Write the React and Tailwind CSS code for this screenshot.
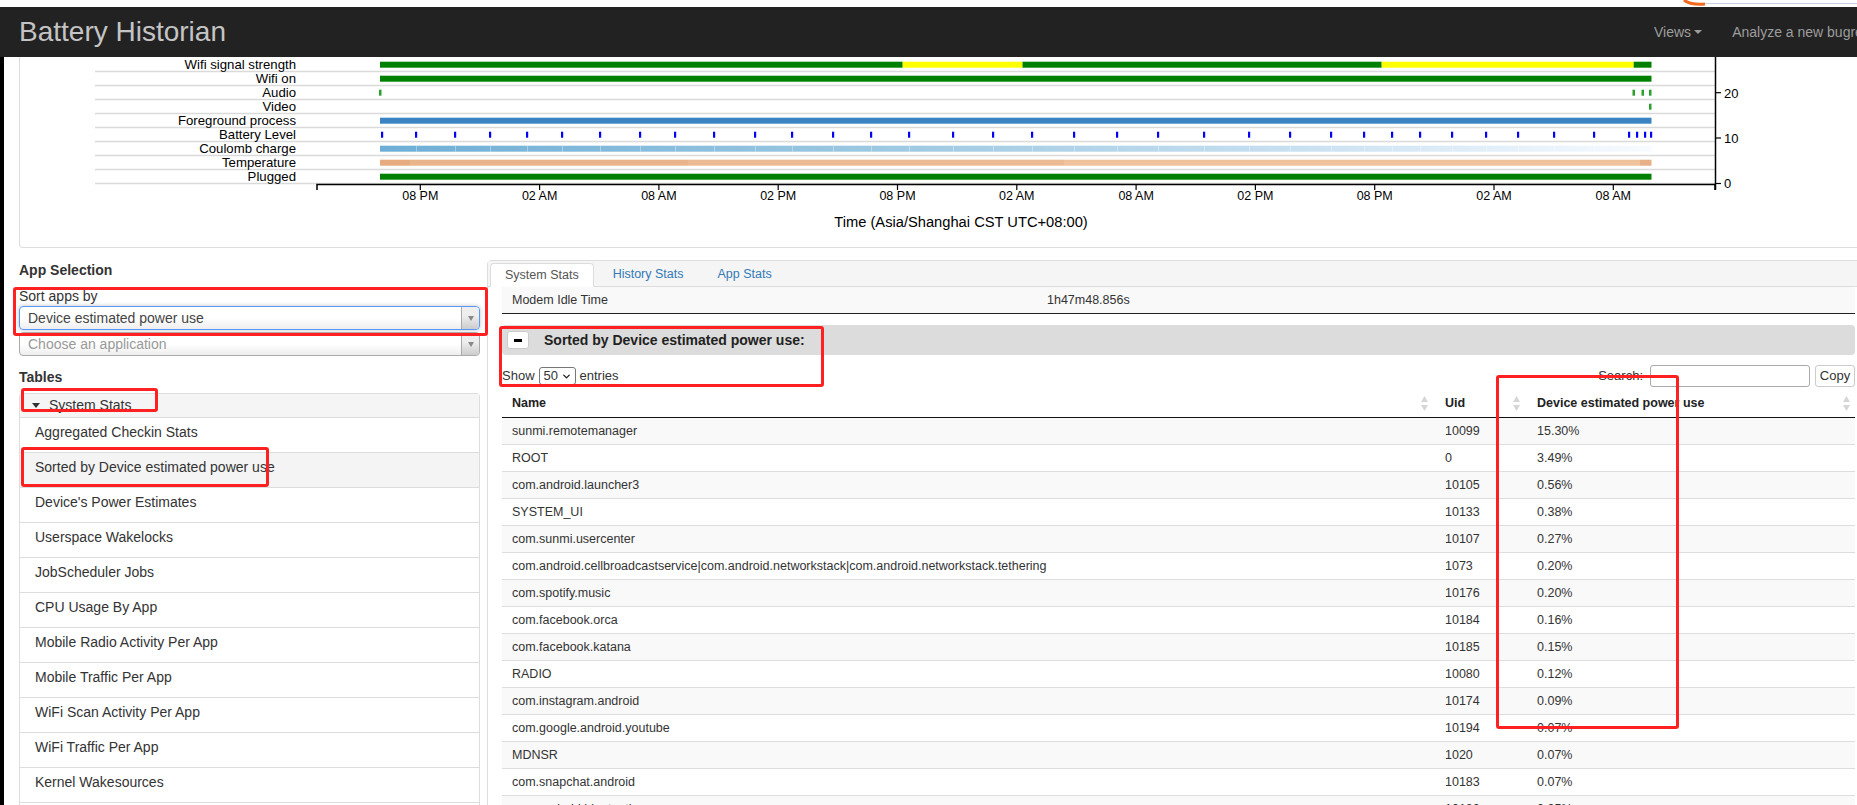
import React from 'react';
import { ChevronDown } from 'lucide-react';

// chart geometry, in page pixels (the svg viewBox starts at the panel's inner corner)
const labels = ['Wifi signal strength', 'Wifi on', 'Audio', 'Video', 'Foreground process', 'Battery Level', 'Coulomb charge', 'Temperature', 'Plugged'];
const rowY = (i) => 64.7 + 14 * i;
const X0 = 380;
const X1 = 1651.5;
const timeTicks = ['08 PM', '02 AM', '08 AM', '02 PM', '08 PM', '02 AM', '08 AM', '02 PM', '08 PM', '02 AM', '08 AM'];
const batteryTicks = [382, 416, 455, 490, 527, 562, 600, 640, 675, 714, 755, 792, 833, 871, 909, 953, 993, 1032, 1074, 1117, 1158, 1204, 1249, 1290, 1331, 1364, 1392, 1420, 1452, 1486, 1518, 1554, 1594, 1629, 1637, 1645, 1651];

const wifiSignal = [
  [380, 902.7, '#008000'],
  [902.7, 1022.5, '#ffff00'],
  [1022.5, 1381.7, '#008000'],
  [1381.7, 1633.7, '#ffff00'],
  [1633.7, 1651.5, '#008000'],
];
const temperature = [
  [380, 410, '#e6ab7f'],
  [410, 688, '#eab48a'],
  [688, 1064, '#edbb93'],
  [1064, 1640, '#f0c29c'],
  [1640, 1651.5, '#e8b088'],
];

const apps = [
  ['sunmi.remotemanager', '10099', '15.30%'],
  ['ROOT', '0', '3.49%'],
  ['com.android.launcher3', '10105', '0.56%'],
  ['SYSTEM_UI', '10133', '0.38%'],
  ['com.sunmi.usercenter', '10107', '0.27%'],
  ['com.android.cellbroadcastservice|com.android.networkstack|com.android.networkstack.tethering', '1073', '0.20%'],
  ['com.spotify.music', '10176', '0.20%'],
  ['com.facebook.orca', '10184', '0.16%'],
  ['com.facebook.katana', '10185', '0.15%'],
  ['RADIO', '10080', '0.12%'],
  ['com.instagram.android', '10174', '0.09%'],
  ['com.google.android.youtube', '10194', '0.07%'],
  ['MDNSR', '1020', '0.07%'],
  ['com.snapchat.android', '10183', '0.07%'],
  ['com.android.bluetooth', '10182', '0.05%'],
];

const tables = [
  'Aggregated Checkin Stats',
  'Sorted by Device estimated power use',
  "Device's Power Estimates",
  'Userspace Wakelocks',
  'JobScheduler Jobs',
  'CPU Usage By App',
  'Mobile Radio Activity Per App',
  'Mobile Traffic Per App',
  'WiFi Scan Activity Per App',
  'WiFi Traffic Per App',
  'Kernel Wakesources',
  'Kernel Wakelocks',
];

const Bar = ({ row, from, to, color }) => (
  <rect x={from} y={rowY(row) - 3} width={to - from} height={6} fill={color} />
);

const Timeline = () => (
  <svg width="1858" height="190" viewBox="20 57 1858 190" className="block">
    <defs>
      <linearGradient id="coulomb" x1="0" x2="1" y1="0" y2="0">
        <stop offset="0" stopColor="#6eaed6" />
        <stop offset="0.4" stopColor="#9dc9e2" />
        <stop offset="0.7" stopColor="#c5def0" />
        <stop offset="1" stopColor="#f7fbff" />
      </linearGradient>
    </defs>

    {labels.map((l, i) => (
      <g key={l}>
        <line x1="95" x2="1715" y1={71.5 + 14 * i} y2={71.5 + 14 * i} stroke="#dadada" strokeWidth="1.5" />
        <text x="296" y={rowY(i) + 4.6} textAnchor="end" fontSize="13.2" fill="#000" fontFamily="Liberation Sans, Arial, sans-serif">
          {l}
        </text>
      </g>
    ))}

    {wifiSignal.map(([a, b, c], i) => <Bar key={'ws' + i} row={0} from={a} to={b} color={c} />)}
    <Bar row={1} from={X0} to={X1} color="#008000" />
    {[380, 1633.5, 1642.5, 1650].map((x) => (
      <rect key={'au' + x} x={x - 1} y={rowY(2) - 3} width="2.5" height="6" fill="#2ca02c" />
    ))}
    <rect x={1649} y={rowY(3) - 3} width="2.5" height="6" fill="#2ca02c" />
    <Bar row={4} from={X0} to={X1} color="#3b83c3" />
    {batteryTicks.map((x) => (
      <rect key={'bt' + x} x={x - 1} y={rowY(5) - 3} width="2.2" height="6" fill="#0000ff" />
    ))}
    <rect x={X0} y={rowY(6) - 3} width={X1 - X0} height="6" fill="url(#coulomb)" />
    {batteryTicks.slice(1, -4).map((x) => (
      <rect key={'cs' + x} x={x} y={rowY(6) - 3} width="1" height="6" fill="#ffffff" opacity="0.35" />
    ))}
    {temperature.map(([a, b, c], i) => <Bar key={'tp' + i} row={7} from={a} to={b} color={c} />)}
    <Bar row={8} from={X0} to={X1} color="#008000" />

    {/* x axis */}
    <path d="M317,190V184.5H1715V190" fill="none" stroke="#000" strokeWidth="1.5" />
    {timeTicks.map((t, i) => {
      const x = 420.3 + 119.3 * i;
      return (
        <g key={'tt' + i}>
          <line x1={x} x2={x} y1="184.5" y2="190" stroke="#000" strokeWidth="1.2" />
          <text x={x} y="199.5" textAnchor="middle" fontSize="12.5" fill="#000" fontFamily="Liberation Sans, Arial, sans-serif">
            {t}
          </text>
        </g>
      );
    })}
    <text x="961" y="227" textAnchor="middle" fontSize="14.7" fill="#000" fontFamily="Liberation Sans, Arial, sans-serif">
      Time (Asia/Shanghai CST UTC+08:00)
    </text>

    {/* y axis */}
    <line x1="1715.5" x2="1715.5" y1="57" y2="190" stroke="#000" strokeWidth="1.5" />
    {[[92.7, '20'], [138, '10'], [183.5, '0']].map(([y, t]) => (
      <g key={'yt' + t}>
        <line x1="1715" x2="1721" y1={y} y2={y} stroke="#000" strokeWidth="1.2" />
        <text x="1724" y={y + 4.8} fontSize="13" fill="#000" fontFamily="Liberation Sans, Arial, sans-serif">
          {t}
        </text>
      </g>
    ))}
  </svg>
);

const Select2 = ({ text, focused, placeholder }) => (
  <div
    className={
      'flex h-[24px] rounded-[4px] border bg-[linear-gradient(to_top,#eeeeee_0%,#ffffff_50%)] ' +
      (focused ? 'border-[#5897fb] shadow-[0_0_4px_rgba(0,0,0,0.25)]' : 'border-[#aaaaaa]')
    }
  >
    <span className={'flex-1 pl-[8px] text-[14px] leading-[22px] ' + (placeholder ? 'text-[#999]' : 'text-[#444]')}>{text}</span>
    <span className="flex w-[18px] items-center justify-center rounded-r-[4px] border-l border-[#aaaaaa] bg-[linear-gradient(to_top,#cccccc_0%,#eeeeee_60%)]">
      <span className="h-0 w-0 border-x-[3.5px] border-t-[5px] border-x-transparent border-t-[#888]" />
    </span>
  </div>
);

const SortIcon = () => (
  <svg width="7" height="15" viewBox="0 0 7 15" className="shrink-0">
    <path d="M3.5 0L7 6H0Z" fill="#d6d6d6" />
    <path d="M0 9H7L3.5 15Z" fill="#d6d6d6" />
  </svg>
);

const cols = 'grid grid-cols-[933px_92px_328px]';

const RedBox = ({ className }) => (
  <div className={'pointer-events-none absolute rounded-[3px] border-[3px] border-[#ff2121] ' + className} />
);

export default function App() {
  return (
    <div className="relative h-[805px] w-[1857px] overflow-hidden bg-white font-['Liberation_Sans',Arial,sans-serif] text-[#333]">
      <div className="h-[7px] bg-white" />

      <nav className="flex h-[50px] w-[1902px] items-center justify-between bg-[#222]">
        <span className="pl-[19px] text-[28px] leading-none text-[#c4c4c4]">Battery Historian</span>
        <div className="flex items-center text-[14px] text-[#9d9d9d]">
          <span className="flex items-center px-[15px]">
            Views
            <span className="ml-[3px] h-0 w-0 border-x-[4px] border-t-[4px] border-x-transparent border-t-[#9d9d9d]" />
          </span>
          <span className="whitespace-nowrap px-[15px]">Analyze a new bugreport</span>
        </div>
      </nav>

      <div className="flex">
        <div className="h-[748px] w-[4px] shrink-0 bg-black" />

        <div className="shrink-0 pl-[15px]">
          <div className="h-[191px] w-[1860px] rounded-b-[4px] border-x border-b border-[#ddd]">
            <Timeline />
          </div>

          <div className="mt-[12px] flex gap-[7px]">
            {/* left column */}
            <div className="w-[461px] shrink-0">
              <div className="h-[20px] text-[14px] font-bold leading-[20px]">App Selection</div>
              <div className="mt-[6px] h-[20px] text-[14px] leading-[20px]">Sort apps by</div>
              <Select2 text="Device estimated power use" focused />
              <div className="mt-[2px]">
                <Select2 text="Choose an application" placeholder />
              </div>
              <div className="mt-[11px] h-[20px] text-[14px] font-bold leading-[20px]">Tables</div>
              <div className="mt-[6px] rounded-t-[4px] border-x border-t border-[#ddd]">
                <div className="flex h-[23px] items-center bg-[#f5f5f5] pl-[12px] text-[14px]">
                  <span className="mr-[9px] h-0 w-0 border-x-[4px] border-t-[5px] border-x-transparent border-t-[#333]" />
                  System Stats
                </div>
                {tables.map((t, i) => (
                  <div
                    key={t}
                    className={'flex h-[35px] items-center border-t border-[#ddd] pb-[5px] pl-[15px] text-[14px] ' + (i === 1 ? 'bg-[#f4f4f4]' : 'bg-white')}
                  >
                    {t}
                  </div>
                ))}
              </div>
            </div>

            {/* right column */}
            <div className="w-[1400px] shrink-0 rounded-[4px] border border-[#ddd]">
              <div className="flex h-[26px] gap-[4px] border-b border-[#ddd] bg-[#f5f5f5] pl-[2px] pt-[2px] text-[12.5px]">
                <span className="-mb-px flex h-[24px] items-center rounded-t-[4px] border-x border-t border-[#ddd] bg-white px-[14px] text-[#555]">
                  System Stats
                </span>
                <span className="flex h-[23px] items-center px-[15px] text-[#337ab7]">History Stats</span>
                <span className="flex h-[23px] items-center px-[15px] text-[#337ab7]">App Stats</span>
              </div>

              <div className="w-[1367px] pl-[14px] text-[12.5px]">
                <div className="grid h-[27px] grid-cols-[535px_1fr] items-center border-b border-[#222] bg-[#f9f9f9]">
                  <span className="pl-[10px]">Modem Idle Time</span>
                  <span className="pl-[10px]">1h47m48.856s</span>
                </div>

                <div className="mt-[11px] flex h-[30px] w-[1353px] items-center rounded-[4px] bg-[#dcdcdc] pl-[5px]">
                  <span className="flex h-[18px] w-[22px] items-center justify-center rounded-[3px] border border-[#ccc] bg-white">
                    <span className="h-[3px] w-[8px] bg-black" />
                  </span>
                  <span className="ml-[15px] text-[14px] font-bold text-[#222]">Sorted by Device estimated power use:</span>
                </div>

                <div className="mt-[10px] flex h-[22px] w-[1353px] items-center justify-between text-[13px]">
                  <div className="flex items-center">
                    Show
                    <span className="ml-[4px] mr-[4px] flex h-[18px] w-[37px] items-center justify-between rounded-[3px] border border-[#767676] bg-white pl-[4px] pr-[3px] text-[13px]">
                      50
                      <ChevronDown size={11} strokeWidth={3} color="#222" />
                    </span>
                    entries
                  </div>
                  <div className="flex items-center">
                    Search:
                    <span className="ml-[7px] h-[22px] w-[160px] rounded-[3px] border border-[#aaa] bg-white" />
                    <span className="ml-[5px] flex h-[22px] w-[40px] items-center justify-center rounded-[3px] border border-[#ccc] bg-white">
                      Copy
                    </span>
                  </div>
                </div>

                <div className={cols + ' h-[31px] w-[1353px] border-b border-[#111] pt-[3px] font-bold text-[#222]'}>
                  <div className="flex items-center justify-between pl-[10px] pr-[7px]">
                    Name
                    <SortIcon />
                  </div>
                  <div className="flex items-center justify-between pl-[10px] pr-[7px]">
                    Uid
                    <SortIcon />
                  </div>
                  <div className="flex items-center justify-between pl-[10px] pr-[5px]">
                    Device estimated power use
                    <SortIcon />
                  </div>
                </div>

                {apps.map(([name, uid, pct], i) => (
                  <div
                    key={name}
                    className={cols + ' h-[27px] w-[1353px] items-center border-b border-[#ddd] ' + (i % 2 === 0 ? 'bg-[#f9f9f9]' : 'bg-white')}
                  >
                    <span className="whitespace-nowrap pl-[10px]">{name}</span>
                    <span className="pl-[10px]">{uid}</span>
                    <span className="pl-[10px]">{pct}</span>
                  </div>
                ))}
              </div>
            </div>
          </div>
        </div>
      </div>

      {/* marks drawn on top of the screenshot */}
      <svg className="pointer-events-none absolute left-[1680px] top-0" width="177" height="7" viewBox="0 0 177 7">
        <path d="M4,0 Q10,5 25,4" fill="none" stroke="#f26b1d" strokeWidth="3" />
        <line x1="25" x2="177" y1="3.5" y2="3.5" stroke="#c9d3e0" strokeWidth="1" />
      </svg>
      <RedBox className="left-[13px] top-[287px] h-[49px] w-[475px]" />
      <RedBox className="left-[21px] top-[388px] h-[24px] w-[137px]" />
      <RedBox className="left-[21px] top-[447px] h-[40px] w-[248px]" />
      <RedBox className="left-[499px] top-[326px] h-[61px] w-[325px]" />
      <RedBox className="left-[1496px] top-[375px] h-[354px] w-[183px]" />
    </div>
  );
}
